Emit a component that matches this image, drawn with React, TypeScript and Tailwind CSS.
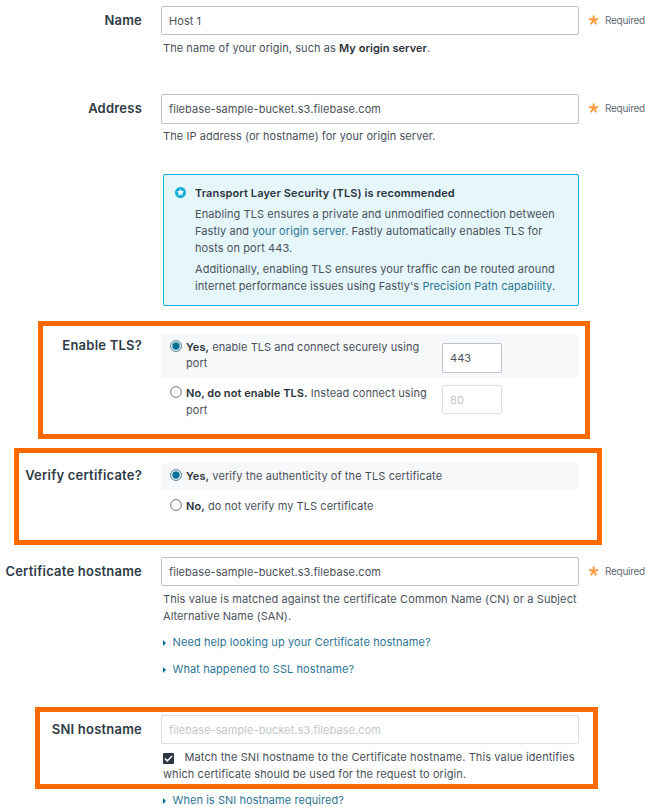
import type { ReactNode } from "react";

function Field({ label, className = "", labelClass = "mt-[6px]", children }: { label: string; className?: string; labelClass?: string; children: ReactNode }) {
  return (
    <section className={`flex items-start ${className}`}>
      <h2 className={`w-[142px] shrink-0 whitespace-nowrap text-right text-[13px] font-semibold leading-[17px] tracking-[0.22px] text-[#2f3a46] ${labelClass}`}>
        {label}
      </h2>
      <div className="ml-[19px] w-[418px] shrink-0">{children}</div>
    </section>
  );
}

function TextBox({ value, className = "h-[29px]", disabled = false }: { value: string; className?: string; disabled?: boolean }) {
  return (
    <div
      className={`flex items-center rounded-[2px] border bg-white pl-[7px] pt-px tracking-[0.07px] ${
        disabled ? "border-[#dcdfe4] text-[#c3c6ca]" : "border-[#bcc3cb] text-[#49515a]"
      } ${className}`}
    >
      {value}
    </div>
  );
}

function Required() {
  return (
    <div className="ml-[10px] mt-[6px] flex h-[17px] items-center text-[10px] tracking-[-0.28px] text-[#626a76]">
      <svg className="-mt-px mr-[6px]" width="10" height="10" viewBox="0 0 10 10" fill="none" stroke="#fb9a3c" strokeWidth="2">
        <path d="M4.6 5.2V.6M4.6 5.2L.2 3.7M4.6 5.2L9 3.7M4.6 5.2L1.8 9.2M4.6 5.2L7.4 9.2" />
      </svg>
      Required
    </div>
  );
}

function Radio({ checked = false }: { checked?: boolean }) {
  return (
    <svg className="shrink-0" width="12" height="12" viewBox="0 0 12 12">
      <circle cx="6" cy="6" r="5.4" fill="#fff" stroke={checked ? "#356b85" : "#626a72"} strokeWidth="0.9" />
      {checked && <circle cx="6" cy="6" r="3.7" fill="#007299" />}
    </svg>
  );
}

function Line({ children, className = "" }: { children: ReactNode; className?: string }) {
  return <div className={`h-[17px] whitespace-nowrap ${className}`}>{children}</div>;
}

function B({ children }: { children: ReactNode }) {
  return <strong className="font-semibold text-[#2b333c]">{children}</strong>;
}

function Disclosure({ children, className = "" }: { children: ReactNode; className?: string }) {
  return (
    <div className={`flex h-[17px] items-center pl-[2px] text-[#2b7594] ${className}`}>
      <svg className="mr-[5.5px] mt-px shrink-0" width="4" height="6" viewBox="0 0 4 6">
        <path d="M0 0L3 3L0 6Z" fill="#007299" />
      </svg>
      <span className="whitespace-nowrap">{children}</span>
    </div>
  );
}

export default function App() {
  return (
    <main className="relative h-[808px] w-[650px] overflow-hidden bg-white pt-[6px] font-['Inter',sans-serif] text-[11px] leading-[17px] tracking-[0.09px] text-[#49515a]">
      <div className="flex h-[88px] items-start">
        <Field label="Name">
          <TextBox value="Host 1" />
          <Line className="mt-[5px] pl-[2px] tracking-[0.06px]">The name of your origin, such as <B>My origin server</B>.</Line>
        </Field>
        <Required />
      </div>

      <div className="flex h-[240px] items-start">
        <Field label="Address">
          <TextBox value="filebase-sample-bucket.s3.filebase.com" className="h-[30px]" />
          <Line className="mt-[4px] pl-[2px] tracking-[0.07px]">The IP address (or hostname) for your origin server.</Line>
          <div className="ml-[2px] mt-[29px] flex h-[132px] rounded-[2px] border border-[#12add9] bg-[#e6f7fc] pl-[11px] pt-[10px]">
            <svg className="mt-[2px] shrink-0" width="11" height="11" viewBox="0 0 11 11">
              <circle cx="5.5" cy="5.5" r="5.5" fill="#12add9" />
              <path d="M5.5 1.8L6.6 4.1L9.1 4.4L7.3 6.2L7.7 8.7L5.5 7.5L3.3 8.7L3.7 6.2L1.9 4.4L4.4 4.1Z" fill="#fff" />
            </svg>
            <div className="ml-[9px]">
              <Line className="tracking-[0.11px]"><B>Transport Layer Security (TLS) is recommended</B></Line>
              <Line className="mt-[4px]">Enabling TLS ensures a private and unmodified connection between</Line>
              <Line>Fastly and <span className="text-[#2b7594]">your origin server</span>. Fastly automatically enables TLS for</Line>
              <Line>hosts on port 443.</Line>
              <Line className="mt-[4px]">Additionally, enabling TLS ensures your traffic can be routed around</Line>
              <Line>internet performance issues using Fastly's <span className="text-[#2b7594]">Precision Path capability</span>.</Line>
            </div>
          </div>
        </Field>
        <Required />
      </div>

      <Field label="Enable TLS?" className="h-[129px]" labelClass="mt-[3px]">
        <div className="flex h-[44px] items-start rounded-[2px] bg-[#f7f8fa] pl-[9px] pt-[5px]">
          <div className="mt-px"><Radio checked /></div>
          <div className="ml-[4px] w-[256px] tracking-[0.06px]">
            <Line>
              <B>Yes,</B> enable TLS and connect securely using
            </Line>
            <Line className="-mt-px">port</Line>
          </div>
          <TextBox value="443" className="mt-[4px] h-[30px] w-[60px]" />
        </div>
        <div className="mt-[6px] flex h-[36px] items-start pl-[9px]">
          <div className="mt-[2px]"><Radio /></div>
          <div className="ml-[4px] mt-px w-[256px] tracking-[0.06px]">
            <Line><B>No, do not enable TLS.</B> Instead connect using</Line>
            <Line>port</Line>
          </div>
          <TextBox value="80" disabled className="mt-px h-[29px] w-[60px]" />
        </div>
      </Field>

      <Field label="Verify certificate?" className="h-[94px]" labelClass="mt-[4px]">
        <div className="flex h-[27px] items-start rounded-[2px] bg-[#f7f8fa] pl-[9px] pt-[5px]">
          <div className="mt-px"><Radio checked /></div>
          <Line className="ml-[4px]"><B>Yes,</B> verify the authenticity of the TLS certificate</Line>
        </div>
        <div className="flex items-start pl-[9px] pt-[8px]">
          <div className="mt-px"><Radio /></div>
          <Line className="ml-[4px] tracking-[0.06px]"><B>No,</B> do not verify my TLS certificate</Line>
        </div>
      </Field>

      <div className="flex h-[158px] items-start">
        <Field label="Certificate hostname">
          <TextBox value="filebase-sample-bucket.s3.filebase.com" />
          <div className="mt-[5px] pl-[2px]">
            <Line className="tracking-[0.11px]">This value is matched against the certificate Common Name (CN) or a Subject</Line>
            <Line className="tracking-[0.06px]">Alternative Name (SAN).</Line>
          </div>
          <Disclosure className="mt-[9px]">Need help looking up your Certificate hostname?</Disclosure>
          <Disclosure className="mt-[10px]">What happened to SSL hostname?</Disclosure>
        </Field>
        <Required />
      </div>

      <Field label="SNI hostname">
        <TextBox value="filebase-sample-bucket.s3.filebase.com" disabled />
        <div className="mt-[5px] pl-[2px]">
          <Line className="flex items-center tracking-[0.11px]">
            <svg className="mr-[10.5px] mt-[2px] shrink-0" width="11" height="11" viewBox="0 0 11 11">
              <rect width="11" height="11" rx="1" fill="#2d3642" />
              <path d="M2 5.6L4.3 7.9L9 3" fill="none" stroke="#fff" strokeWidth="1.5" />
            </svg>
            Match the SNI hostname to the Certificate hostname. This value identifies
          </Line>
          <Line>which certificate should be used for the request to origin.</Line>
        </div>
        <Disclosure className="mt-[9px] tracking-[0.06px]">When is SNI hostname required?</Disclosure>
      </Field>

      <div className="pointer-events-none absolute left-[38px] top-[321px] h-[118px] w-[552px] border-[5px] border-[#ff6a00]" />
      <div className="pointer-events-none absolute left-[14px] top-[448px] h-[97px] w-[588px] border-[5px] border-[#ff6a00]" />
      <div className="pointer-events-none absolute left-[35px] top-[707px] h-[82px] w-[563px] border-[5px] border-[#ff6a00]" />
    </main>
  );
}
